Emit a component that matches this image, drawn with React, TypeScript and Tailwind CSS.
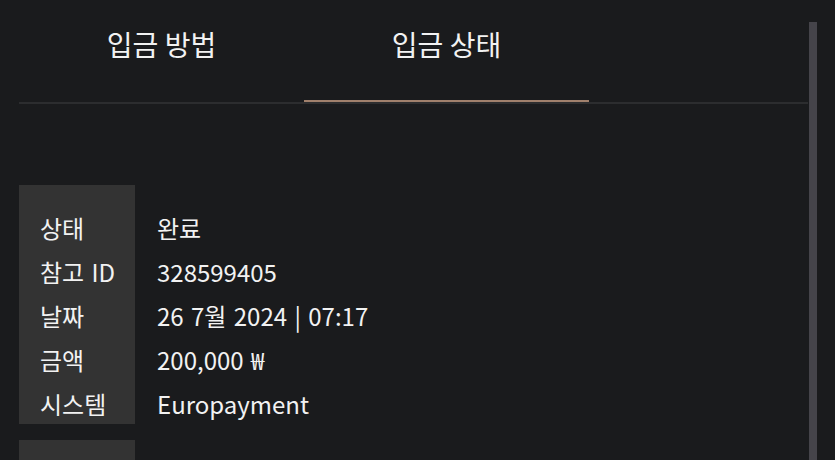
const rows = [
  { label: "상태", value: "완료" },
  { label: "참고 ID", value: "328599405" },
  { label: "날짜", value: "26 7월 2024 | 07:17" },
  { label: "금액", value: "200,000 ₩" },
  { label: "시스템", value: "Europayment" },
];

const tabs = [
  { name: "입금 방법", active: false },
  { name: "입금 상태", active: true },
];

const DepositCard = ({ items }: { items: typeof rows }) => (
  <div className="flex h-[239px] shrink-0 overflow-hidden [word-spacing:2px]">
    <div className="w-[116px] shrink-0 bg-[#333333] pl-[21px] pt-[21px]">
      {items.map((r) => (
        <div key={r.label} className="h-[44px] leading-[44px] whitespace-nowrap">
          {r.label}
        </div>
      ))}
    </div>
    <div className="flex-1 pl-[22px] pt-[21px]">
      {items.map((r) => (
        <div key={r.label} className="h-[44px] leading-[44px] whitespace-nowrap">
          {r.value}
        </div>
      ))}
    </div>
  </div>
);

export default function App() {
  return (
    <div
      className="flex h-[460px] w-[835px] overflow-hidden bg-[#1a1b1d] text-[#f2f2f2]"
      style={{ fontFamily: '"Noto Sans CJK KR", "Noto Sans", sans-serif' }}
    >
      <div className="flex w-[808px] shrink-0 flex-col pl-[19px]">
        <div className="flex border-b-2 border-[#2c2d2f]">
          {tabs.map((t) => (
            <div
              key={t.name}
              className={`flex h-[102px] w-[285px] items-center justify-center border-b-2 pb-[12px] text-[28px] ${
                t.active ? "border-[#a0806c]" : "border-transparent"
              }`}
            >
              {t.name}
            </div>
          ))}
        </div>

        <div className="mt-[81px] flex flex-col gap-[16px] text-[24px]">
          <DepositCard items={rows} />
          {/* next entry, only its top edge is in view */}
          <div className="flex h-[239px] shrink-0">
            <div className="w-[116px] bg-[#333333]" />
          </div>
        </div>
      </div>

      <div className="flex-1 pl-[1px] pt-[22px]">
        <div className="h-full w-[8px] bg-[#45444a]" />
      </div>
    </div>
  );
}
